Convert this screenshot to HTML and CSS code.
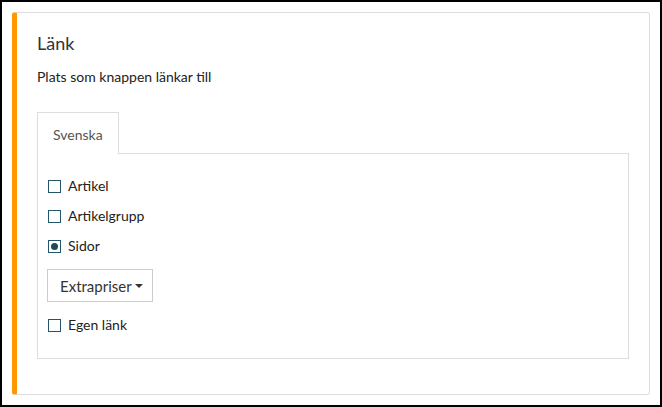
FILE: index.html
```html
<!DOCTYPE html>
<html lang="sv">
<head>
<meta charset="utf-8">
<title>Länk</title>
<link rel="stylesheet" href="styles.css">
</head>
<body>
<div class="frame">
  <div class="card">
    <h3 class="title">Länk</h3>
    <p class="desc">Plats som knappen länkar till</p>
    <div class="tabs">
      <div class="tab">Svenska</div>
    </div>
    <div class="panel">
      <label class="opt"><span class="box"></span><span>Artikel</span></label>
      <label class="opt"><span class="box"></span><span>Artikelgrupp</span></label>
      <label class="opt"><span class="box checked"></span><span>Sidor</span></label>
      <div class="btnrow">
        <button class="btn" type="button">Extrapriser<span class="caret"></span></button>
      </div>
      <label class="opt"><span class="box"></span><span>Egen länk</span></label>
    </div>
  </div>
</div>
</body>
</html>
```

FILE: styles.css
```css
html, body {
  margin: 0;
  padding: 0;
  background: #fff;
}
body {
  font-family: Lato, "Liberation Sans", sans-serif;
  color: #222;
}
.frame {
  width: 662px;
  height: 407px;
  box-sizing: border-box;
  border: 2px solid #000;
  padding: 10px;
}
.card {
  height: 100%;
  box-sizing: border-box;
  border: 1px solid #ddd;
  border-left: 5px solid #ff9800;
  border-radius: 3px;
  padding: 20px 20px 0 20px;
}
.title {
  margin: 0;
  font-size: 18px;
  font-weight: 400;
  line-height: 20px;
  color: #333;
}
.desc {
  margin: 15px 0 0 0;
  font-size: 14px;
  line-height: 18px;
  color: #222;
}
.tabs {
  margin-top: 26px;
  display: flex;
}
.tab {
  border: 1px solid #ddd;
  border-bottom: none;
  padding: 2px 15px 0 15px;
  height: 42px;
  box-sizing: border-box;
  display: flex;
  align-items: center;
  font-size: 14px;
  color: #555;
  background: #fff;
  position: relative;
  margin-bottom: -1px;
}
.panel {
  border: 1px solid #ddd;
  padding: 22px 10px 23px 9px;
  display: flex;
  flex-direction: column;
  align-items: flex-start;
}
.opt {
  display: flex;
  align-items: center;
  height: 20px;
  font-size: 14px;
  line-height: 20px;
  color: #222;
  margin-left: 1px;
}
.opt + .opt {
  margin-top: 10px;
}
.box {
  width: 13px;
  height: 13px;
  box-sizing: border-box;
  border: 1px solid #24566a;
  margin-right: 7px;
  display: flex;
  align-items: center;
  justify-content: center;
  background: #fff;
}
.box.checked::after {
  content: "";
  width: 7px;
  height: 7px;
  border-radius: 50%;
  background: #1e4a5c;
}
.btnrow {
  margin: 13px 0;
}
.btn {
  font-family: Lato, "Liberation Sans", sans-serif;
  font-size: 15px;
  line-height: 20px;
  color: #333;
  background: #fff;
  border: 1px solid #ccc;
  border-radius: 0;
  height: 33px;
  padding: 0 9px 0 12px;
  display: flex;
  align-items: center;
}
.caret {
  display: inline-block;
  width: 0;
  height: 0;
  margin-left: 3px;
  border-top: 4px solid #333;
  border-left: 4px solid transparent;
  border-right: 4px solid transparent;
}
```
